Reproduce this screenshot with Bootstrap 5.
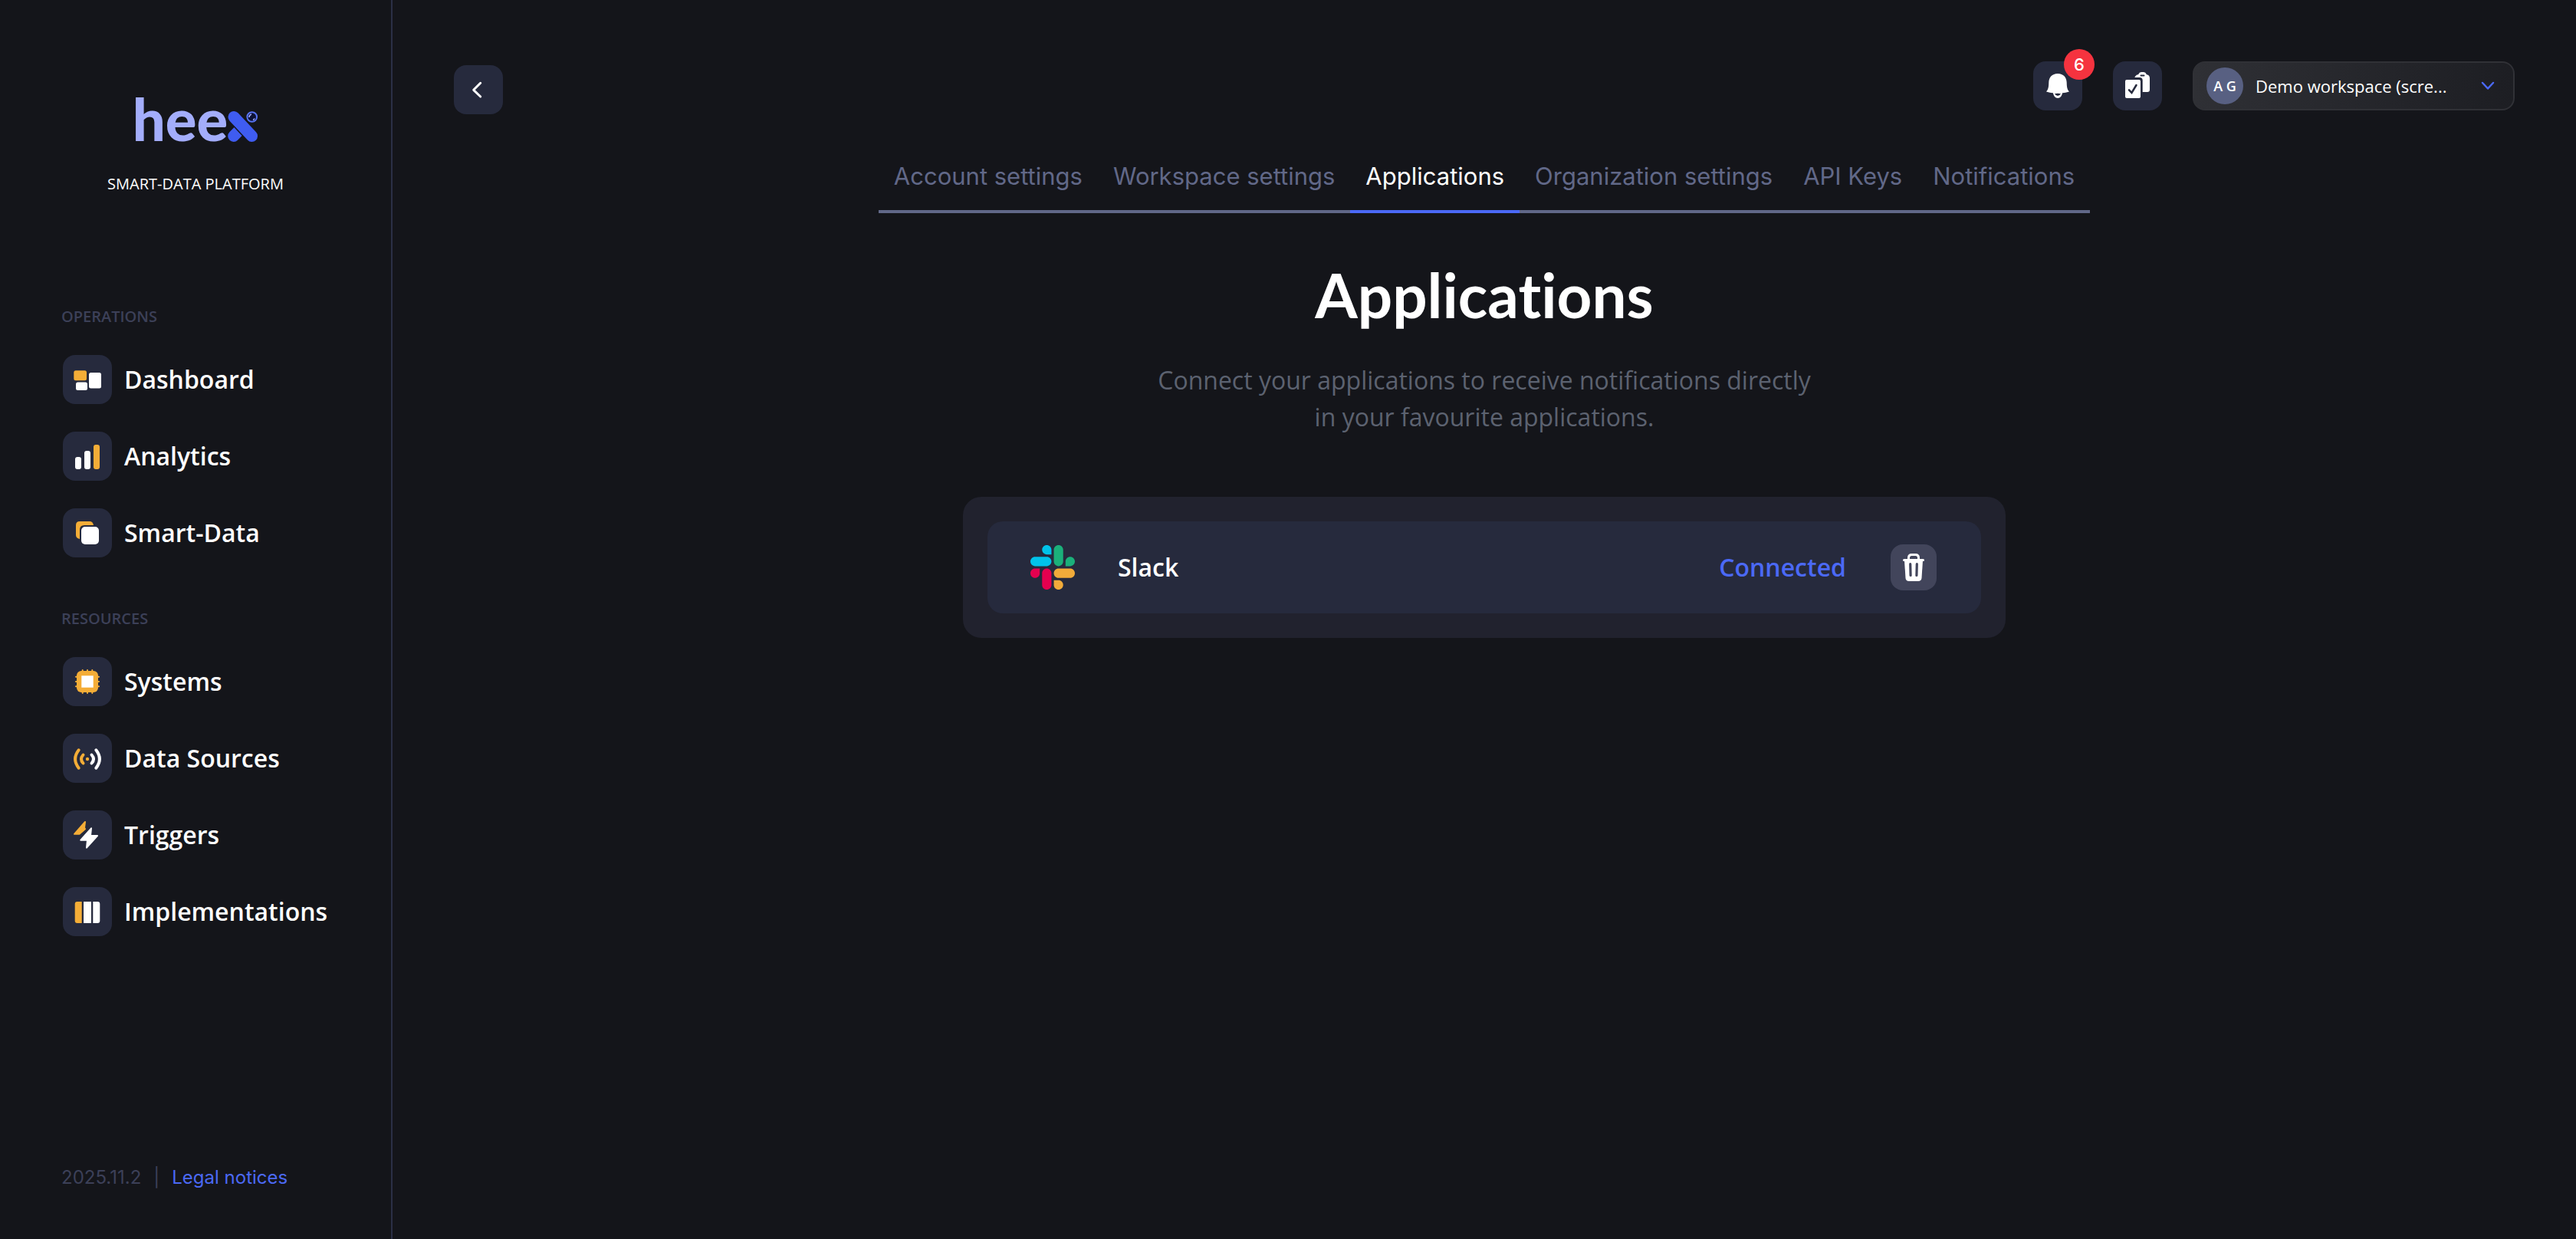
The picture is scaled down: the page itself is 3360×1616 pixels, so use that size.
<!DOCTYPE html>
<html lang="en" data-bs-theme="dark">
<head>
<meta charset="utf-8">
<meta name="viewport" content="width=device-width, initial-scale=1">
<title>Heex – Applications</title>
<link href="https://cdn.jsdelivr.net/npm/bootstrap@5.3.0/dist/css/bootstrap.min.css" rel="stylesheet">
<style>
  :root { --ink: #14151a; --tile: #262a3d; --line: #2b2f45; --blue: #4b69f6; --amber: #f4ad37; --dim: #3c4058; --slate: #616888; }
  body { background: var(--ink); color: #fff; font-family: "Open Sans", sans-serif; font-size: 32px; line-height: 48px; }
  svg { display: block; flex: none; }
  .side-panel { width: 512px; border-right: 2px solid var(--line); padding: 128px 80px 64px; }
  .brand-word { font: 900 76px/54px Lato, sans-serif; color: #a3adfb; }
  .tagline, .section-label { font-size: 20px; line-height: 28px; }
  .tagline { margin: 40px 0 145px; }
  .section-label { color: var(--dim); font-weight: 600; margin-bottom: 36px; }
  .side-list { display: flex; flex-direction: column; gap: 36px; padding-left: 2px; margin-bottom: 66px; }
  .side-list a { color: #fff; font-weight: 600; gap: 16px; line-height: 64px; }
  .tile { width: 64px; height: 64px; border-radius: 16px; background: var(--tile); border: 0; padding: 0; flex: none; }
  .foot { font: 24px/32px Inter, sans-serif; color: var(--dim); gap: 16px; }
  .foot a { color: var(--blue); }
  .main-panel { min-width: 0; padding: 80px; }
  .back-tile { margin-top: 5px; }
  .tool-row { gap: 40px; }
  .count-dot { top: -16px; left: 40px; width: 40px; height: 40px; background: #f5333f; font: 500 22px/40px Inter, sans-serif; }
  .workspace-box { width: 420px; height: 64px; border: 2px solid #303136; border-radius: 16px; background: linear-gradient(90deg, #2f3035, #1d1e23); padding: 0 24px 0 16px; gap: 16px; }
  .avatar { width: 48px; height: 48px; background: #586082; font-size: 18px; font-weight: 600; line-height: 48px; flex: none; }
  .workspace-box select { background: none; border: 0; padding: 0; color: #fff; font-size: 22px; line-height: 32px; font-weight: 500; }
  .settings-tabs { margin-top: 51px; font: 31px/60px Inter, sans-serif; border-bottom: 4px solid var(--slate); }
  .settings-tabs a { display: block; color: var(--slate); padding: 0 20px 14px; margin-bottom: -4px; border-bottom: 4px solid transparent; }
  .settings-tabs a.current { color: #fff; border-color: var(--blue); }
  .page-title { font: 700 80px/96px Lato, sans-serif; font-variant-ligatures: none; margin: 58px 0 40px; }
  .intro { color: #5c6270; }
  .app-panel { width: 1360px; max-width: 100%; margin-top: 80px; padding: 32px; border-radius: 24px; background: #21222e; }
  .app-row { background: var(--tile); border-radius: 20px; padding: 30px 58px 30px 56px; font-weight: 600; }
  .app-row .app-name { margin-left: 56px; }
  .app-row .state { color: var(--blue); margin-right: 58px; }
  .trash { width: 60px; height: 60px; border: 0; padding: 0; border-radius: 16px; background: #42455b; }
</style>
<script src="https://cdn.jsdelivr.net/npm/bootstrap@5.3.0/dist/js/bootstrap.bundle.min.js"></script>
</head>
<body>
<div class="d-flex min-vh-100">
  <aside class="side-panel d-flex flex-column flex-shrink-0">
    <div class="d-flex justify-content-center">
      <span class="brand-word">hee</span>
      <svg width="40" height="58" viewBox="120 0 40 58" aria-hidden="true">
        <path d="M127.700 49.500L139 38" stroke="#3f5cf0" stroke-width="15" stroke-linecap="round"/>
        <path d="M128 24.500L151.500 49.500" stroke="#14151a" stroke-width="18" stroke-linecap="butt"/>
        <path d="M128 24.500L151.500 49.500" stroke="#3f5cf0" stroke-width="15" stroke-linecap="round"/>
        <circle cx="151.700" cy="24.500" r="6.300" fill="#0d1235" stroke="#5873f2" stroke-width="2"/>
        <path d="M148 25a4 4 0 0 1 3-4M153 28.500a4 4 0 0 0 2-2" stroke="#a3adfb" stroke-width="1.500" fill="none"/>
      </svg>
    </div>
    <p class="tagline text-center">SMART-DATA PLATFORM</p>

    <div class="section-label">OPERATIONS</div>
    <nav class="side-list" aria-label="Operations">
      <a href="#" class="d-flex text-decoration-none"><svg class="tile" viewBox="0 0 64 64"><rect x="14.300" y="20.300" width="16.700" height="13" rx="2.500" fill="#f4ad37"/><g fill="#fff"><rect x="17" y="35.600" width="15" height="10.400" rx="2.500"/><rect x="34" y="23" width="16" height="20.400" rx="2.500"/></g></svg>Dashboard</a>
      <a href="#" class="d-flex text-decoration-none"><svg class="tile" viewBox="0 0 64 64"><g fill="#fff"><rect x="16" y="33" width="8" height="16" rx="3"/><rect x="28" y="25" width="8" height="24" rx="3"/></g><rect x="40" y="17" width="8" height="32" rx="3" fill="#f4ad37"/></svg>Analytics</a>
      <a href="#" class="d-flex text-decoration-none"><svg class="tile" viewBox="0 0 64 64"><path d="M22 17h13q4 0 5 5H28q-6 0-6 6v12q-5-1-5-5V22q0-5 5-5z" fill="#f4ad37"/><rect x="24" y="24" width="23" height="23" rx="5" fill="#fff"/></svg>Smart-Data</a>
    </nav>

    <div class="section-label">RESOURCES</div>
    <nav class="side-list" aria-label="Resources">
      <a href="#" class="d-flex text-decoration-none"><svg class="tile" viewBox="0 0 64 64"><path d="M25.700 17v30M32 17v30M38.300 17v30M17 25.700h30M17 32h30M17 38.300h30" stroke="#f4ad37" stroke-width="2" stroke-linecap="round"/><rect x="18" y="18" width="28" height="28" rx="6" fill="#f4ad37"/><rect x="24.300" y="24.300" width="15.400" height="15.400" fill="#fff"/></svg>Systems</a>
      <a href="#" class="d-flex text-decoration-none"><svg class="tile" viewBox="0 0 64 64" fill="none" stroke-width="4" stroke-linecap="round"><path d="M20.700 21.300Q11.500 33 20.700 44.700M26.500 27.500Q21.500 33 26.500 38.500" stroke="#f4ad37"/><path d="M43.300 21.300Q52.500 33 43.300 44.700M37.500 27.500Q42.500 33 37.500 38.500" stroke="#fff"/><circle cx="32" cy="33" r="2.200" fill="#f4ad37"/></svg>Data Sources</a>
      <a href="#" class="d-flex text-decoration-none"><svg class="tile" viewBox="0 0 64 64" stroke-width="2" stroke-linejoin="round"><path d="M29 15L15 30.800H21.500L29 24.300L28 22.500z" fill="#f4ad37" stroke="#f4ad37"/><path d="M37 23.300L23.300 38.700H32L31 48.700L45 33H36z" fill="#fff" stroke="#fff"/></svg>Triggers</a>
      <a href="#" class="d-flex text-decoration-none"><svg class="tile" viewBox="0 0 64 64"><path d="M24.700 19v28h-6q-3 0-3-3V22q0-3 3-3z" fill="#f4ad37"/><path d="M27 19h10v28H27zM39.300 19h6q3 0 3 3v22q0 3-3 3h-6z" fill="#fff"/></svg>Implementations</a>
    </nav>

    <footer class="foot d-flex mt-auto"><span>2025.11.2</span><span>|</span><a href="#" class="text-decoration-none">Legal notices</a></footer>
  </aside>

  <main class="main-panel flex-grow-1 d-flex flex-column align-items-center">
    <header class="d-flex justify-content-between align-items-start w-100">
      <button type="button" class="tile back-tile" aria-label="Back"><svg width="64" height="64" viewBox="0 0 64 64"><path d="M34.700 23.300L25.700 32.300L34.700 41" fill="none" stroke="#fff" stroke-width="3" stroke-linecap="round" stroke-linejoin="round"/></svg></button>
      <div class="tool-row d-flex">
        <button type="button" class="tile position-relative text-white" aria-label="Notifications">
          <svg width="64" height="64" viewBox="0 0 64 64"><path d="M32 16C24.500 16 20.500 21 20.300 27.500C20.200 34 19.500 37 17 39.500Q23 41.500 26 41.200A6.300 6.300 0 0 0 38 41.200Q41 41.500 47 39.500C44.500 37 43.800 34 43.700 27.500C43.500 21 39.500 16 32 16z" fill="#fff"/><path d="M26 41Q27 48 32 48T38 41z" fill="#fff"/><path d="M28 42.200Q32 41.500 36 42.200Q34.500 45 32 45T28 42.200z" fill="#262a3d"/></svg>
          <span class="count-dot position-absolute rounded-circle text-center">6</span>
        </button>
        <button type="button" class="tile" aria-label="Tasks">
          <svg width="64" height="64" viewBox="0 0 64 64"><path d="M28.300 21Q30 17.500 33 17.200Q34.500 14 37 14H40Q42.500 14 44 17.200Q48 18 48 22V37Q48 40 45 40H38.700V25Q38.700 21 34.700 21z" fill="#fff"/><path d="M36.500 18.500h4" stroke="#262a3d" stroke-width="2" stroke-linecap="round"/><rect x="16" y="24" width="20" height="24" rx="2" fill="#fff"/><path d="M21 37.300L24.500 41L30.500 31" fill="none" stroke="#262a3d" stroke-width="2.500" stroke-linecap="round"/></svg>
        </button>
        <div class="workspace-box d-flex align-items-center">
          <label for="workspace" class="avatar rounded-circle text-center">A G</label>
          <select id="workspace" class="form-select flex-grow-1" aria-label="Workspace"><option>Demo workspace (scre...</option></select>
          <svg width="18" height="12" viewBox="0 0 18 12"><path d="M2 2l7 7.500L16 2" fill="none" stroke="#4b69f6" stroke-width="2.500" stroke-linecap="round" stroke-linejoin="round"/></svg>
        </div>
      </div>
    </header>

    <nav class="settings-tabs d-flex" aria-label="Settings">
      <a href="#" class="text-decoration-none">Account settings</a>
      <a href="#" class="text-decoration-none">Workspace settings</a>
      <a href="#" class="text-decoration-none current" aria-current="page">Applications</a>
      <a href="#" class="text-decoration-none">Organization settings</a>
      <a href="#" class="text-decoration-none">API Keys</a>
      <a href="#" class="text-decoration-none">Notifications</a>
    </nav>

    <h1 class="page-title">Applications</h1>
    <p class="intro text-center mb-0">Connect your applications to receive notifications directly<br>in your favourite applications.</p>

    <section class="app-panel">
      <div class="app-row d-flex align-items-center">
        <svg width="58" height="58" viewBox="0 0 122.800 122.800" aria-hidden="true">
          <path fill="#e5004f" d="M25.800 77.600c0 7.100-5.800 12.900-12.900 12.900S0 84.700 0 77.600s5.800-12.900 12.900-12.900h12.900v12.900zm6.500 0c0-7.100 5.800-12.900 12.900-12.900s12.900 5.800 12.900 12.900v32.300c0 7.100-5.800 12.900-12.900 12.900s-12.900-5.800-12.900-12.900V77.600z"/>
          <path fill="#00c3ea" d="M45.200 25.800c-7.100 0-12.900-5.800-12.900-12.900S38.100 0 45.200 0s12.900 5.800 12.900 12.900v12.900H45.200zm0 6.500c7.100 0 12.900 5.800 12.900 12.900s-5.800 12.900-12.900 12.900H12.900C5.800 58.100 0 52.300 0 45.200s5.800-12.900 12.900-12.900h32.300z"/>
          <path fill="#1bb07a" d="M97 45.200c0-7.100 5.800-12.900 12.900-12.900s12.900 5.800 12.900 12.900-5.800 12.900-12.900 12.900H97V45.200zm-6.500 0c0 7.100-5.800 12.900-12.900 12.900s-12.900-5.800-12.900-12.900V12.900C64.700 5.800 70.500 0 77.600 0s12.900 5.800 12.900 12.900v32.300z"/>
          <path fill="#f1ab3a" d="M77.600 97c7.100 0 12.900 5.800 12.900 12.900s-5.800 12.900-12.900 12.900-12.900-5.800-12.900-12.900V97h12.900zm0-6.500c-7.100 0-12.900-5.800-12.900-12.900s5.800-12.900 12.900-12.900h32.300c7.100 0 12.900 5.800 12.900 12.900s-5.800 12.900-12.900 12.900H77.600z"/>
        </svg>
        <span class="app-name me-auto">Slack</span>
        <span class="state">Connected</span>
        <button type="button" class="trash" aria-label="Remove Slack"><svg width="60" height="60" viewBox="0 0 60 60"><path d="M23.500 20v-2.500q0-4 4-4h5q4 0 4 4V20" fill="none" stroke="#fff" stroke-width="3"/><path d="M17.500 20.500h25" stroke="#fff" stroke-width="3" stroke-linecap="round"/><path d="M18 21h24l-1.500 23q-.5 4-4.500 4H24q-4 0-4.500-4z" fill="#fff"/><path d="M25.700 25.700l.4 14.800M34.300 25.700l-.4 14.800" stroke="#42455b" stroke-width="3.200" stroke-linecap="round"/></svg></button>
      </div>
    </section>
  </main>
</div>
</body>
</html>
